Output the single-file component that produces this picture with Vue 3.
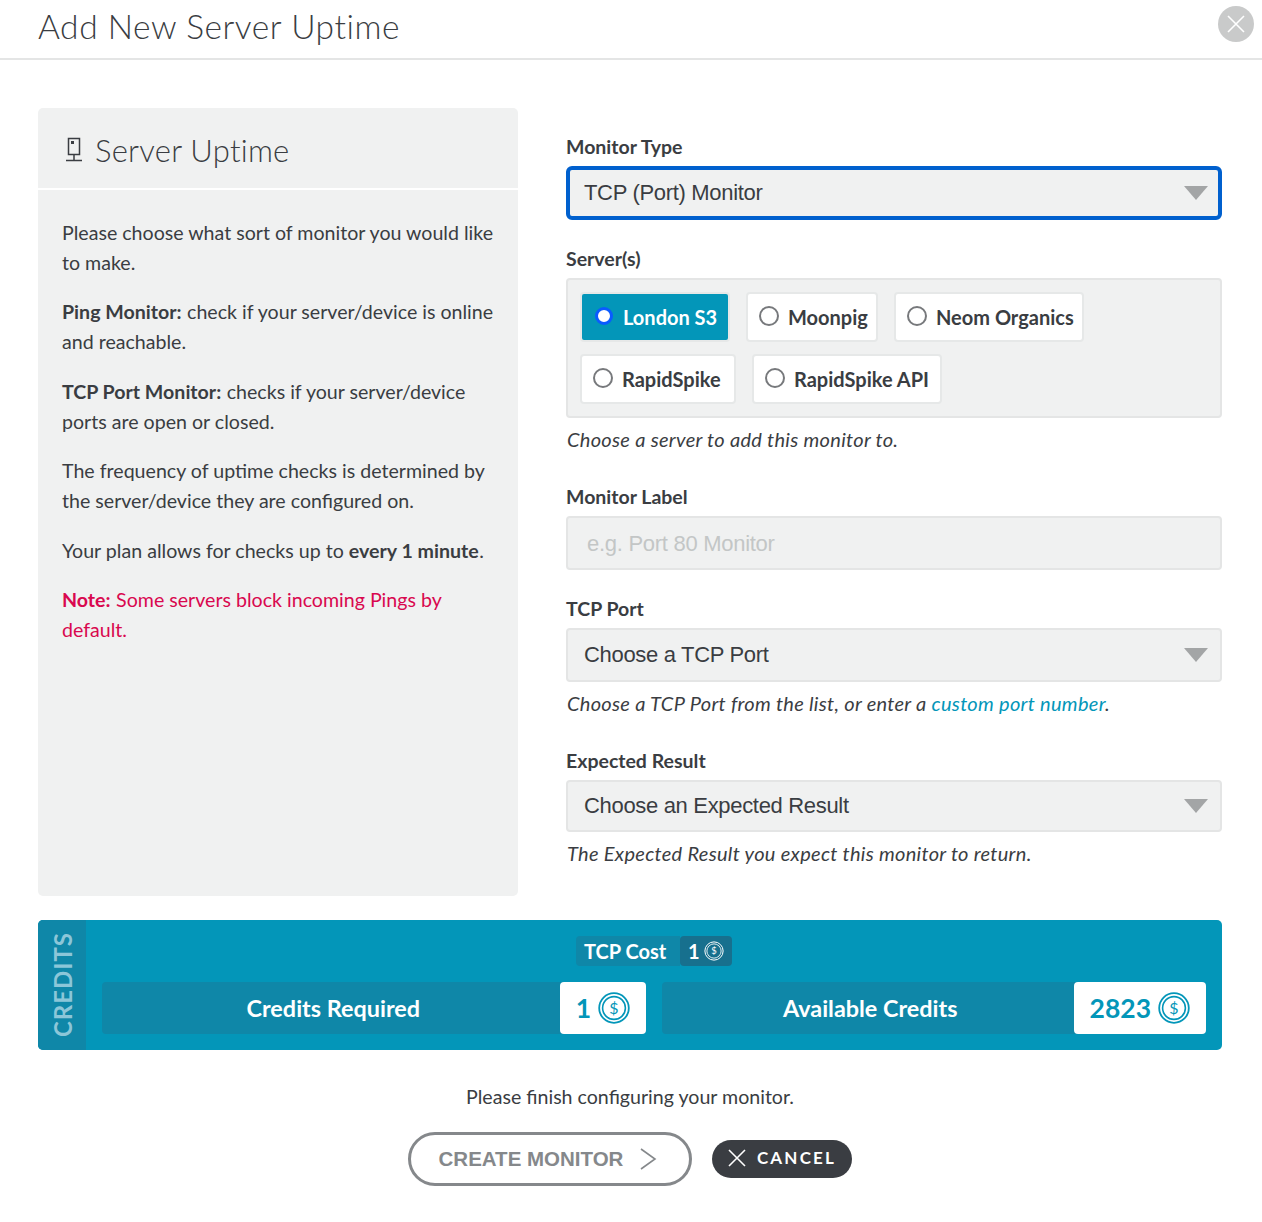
<template>
  <div class="modal">
    <!-- Header -->
    <div class="modal-header">
      <h1 class="modal-title">Add New Server Uptime</h1>
      <button class="btn-close" aria-label="Close">
        <svg width="20" height="20" viewBox="0 0 20 20"><path d="M2 2 18 18M18 2 2 18" stroke="#fff" stroke-width="1.6" fill="none" /></svg>
      </button>
    </div>

    <div class="modal-body">
      <!-- Info panel -->
      <div class="info-panel">
        <div class="info-head">
          <svg class="info-icon" width="20" height="28" viewBox="0 0 20 28">
            <path d="M4.5 2.5h11v16h-11zM10 18.5v6M2 24.5h16" stroke="#3a3d42" stroke-width="1.5" fill="none" />
            <rect x="7" y="5" width="3" height="3" fill="#3a3d42" />
          </svg>
          <span>Server Uptime</span>
        </div>
        <div class="info-text">
          <p>Please choose what sort of monitor you would like to make.</p>
          <p><b>Ping Monitor:</b> check if your server/device is online and reachable.</p>
          <p><b>TCP Port Monitor:</b> checks if your server/device ports are open or closed.</p>
          <p>The frequency of uptime checks is determined by the server/device they are configured on.</p>
          <p>Your plan allows for checks up to <b>every 1 minute</b>.</p>
          <p class="note"><b>Note:</b> Some servers block incoming Pings by default.</p>
        </div>
      </div>

      <!-- Form -->
      <div class="form">
        <div class="field">
          <label>Monitor Type</label>
          <div class="select focused"><span>TCP (Port) Monitor</span><i class="arrow"></i></div>
        </div>

        <div class="field servers-field">
          <label>Server(s)</label>
          <div class="servers">
            <div v-for="s in servers" :key="s.name" class="chip" :class="{ active: s.active }" :style="{ width: s.width + 'px' }">
              <i class="radio"></i>
              <span>{{ s.name }}</span>
            </div>
          </div>
          <div class="help">Choose a server to add this monitor to.</div>
        </div>

        <div class="field label-field">
          <label>Monitor Label</label>
          <input class="input" placeholder="e.g. Port 80 Monitor" />
        </div>

        <div class="field port-field">
          <label>TCP Port</label>
          <div class="select"><span>Choose a TCP Port</span><i class="arrow"></i></div>
          <div class="help">Choose a TCP Port from the list, or enter a <a>custom port number</a>.</div>
        </div>

        <div class="field result-field">
          <label>Expected Result</label>
          <div class="select short"><span>Choose an Expected Result</span><i class="arrow"></i></div>
          <div class="help">The Expected Result you expect this monitor to return.</div>
        </div>
      </div>
    </div>

    <!-- Credits -->
    <div class="credits">
      <div class="credits-side"><span>CREDITS</span></div>
      <div class="credits-main">
        <div class="cost">
          <span class="cost-label">TCP Cost</span>
          <span class="cost-value">1
            <svg width="20" height="20" viewBox="0 0 32 32" class="coin">
              <circle cx="16" cy="16" r="14.6" fill="none" stroke="#fff" stroke-width="1.6" />
              <circle cx="16" cy="16" r="11.4" fill="none" stroke="#fff" stroke-width="1.4" />
              <text x="16" y="21.5" text-anchor="middle" font-size="15" font-weight="400" fill="#fff">$</text>
            </svg>
          </span>
        </div>
        <div class="credit-rows">
          <div class="credit-row">
            <div class="credit-name">Credits Required</div>
            <div class="credit-val">1
              <svg width="32" height="32" viewBox="0 0 32 32" class="coin">
                <circle cx="16" cy="16" r="14.8" fill="none" stroke="#0396b9" stroke-width="1.8" />
                <circle cx="16" cy="16" r="11.4" fill="none" stroke="#0396b9" stroke-width="1.6" />
                <text x="16" y="22" text-anchor="middle" font-size="16" font-weight="400" fill="#0396b9">$</text>
              </svg>
            </div>
          </div>
          <div class="credit-row">
            <div class="credit-name">Available Credits</div>
            <div class="credit-val">2823
              <svg width="32" height="32" viewBox="0 0 32 32" class="coin">
                <circle cx="16" cy="16" r="14.8" fill="none" stroke="#0396b9" stroke-width="1.8" />
                <circle cx="16" cy="16" r="11.4" fill="none" stroke="#0396b9" stroke-width="1.6" />
                <text x="16" y="22" text-anchor="middle" font-size="16" font-weight="400" fill="#0396b9">$</text>
              </svg>
            </div>
          </div>
        </div>
      </div>
    </div>

    <!-- Footer -->
    <div class="footer">
      <div class="footer-text">Please finish configuring your monitor.</div>
      <div class="footer-actions">
        <button class="btn-create">
          CREATE MONITOR
          <svg width="18" height="22" viewBox="0 0 18 22"><path d="M2 1 16 11 2 21" stroke="#85888b" stroke-width="1.6" fill="none" /></svg>
        </button>
        <button class="btn-cancel">
          <svg width="18" height="18" viewBox="0 0 18 18"><path d="M1 1 17 17M17 1 1 17" stroke="#fff" stroke-width="1.6" fill="none" /></svg>
          CANCEL
        </button>
      </div>
    </div>
  </div>
</template>

<script setup>
const servers = [
  { name: 'London S3', active: true, width: 150 },
  { name: 'Moonpig', width: 132 },
  { name: 'Neom Organics', width: 190 },
  { name: 'RapidSpike', width: 156 },
  { name: 'RapidSpike API', width: 190 }
]
</script>

<style scoped>
.modal,
.modal * {
  box-sizing: border-box;
}

.modal {
  width: 1262px;
  height: 1222px;
  background: #fff;
  color: #3a3d42;
  font-family: Lato, "Noto Sans", sans-serif;
  overflow: hidden;
}

.modal-header {
  height: 60px;
  border-bottom: 2px solid #e4e5e5;
  padding: 0 8px 0 38px;
  display: flex;
  justify-content: space-between;
  align-items: center;
}

.modal-title {
  margin: 0 0 6px;
  font-size: 33.5px;
  font-weight: 300;
  letter-spacing: 0.55px;
  color: #3a3d42;
}

.btn-close {
  width: 36px;
  height: 36px;
  border: 0;
  padding: 0;
  border-radius: 50%;
  background: #c9caca;
  display: flex;
  align-items: center;
  justify-content: center;
  margin-bottom: 10px;
}

.modal-body {
  display: flex;
  gap: 48px;
  padding: 48px 40px 0 38px;
}

.info-panel {
  width: 480px;
  height: 788px;
  flex: none;
  background: #f0f1f1;
  border-radius: 5px;
}

.info-head {
  height: 82px;
  border-bottom: 2px solid #fff;
  padding: 4px 24px 0 26px;
  display: flex;
  align-items: center;
  gap: 11px;
  font-size: 31px;
  font-weight: 300;
  letter-spacing: 0.25px;
}

.info-icon {
  margin-top: 0;
}

.info-text {
  padding: 28px 24px;
  font-size: 19.6px;
  line-height: 30px;
}

.info-text p {
  margin: 0 0 19.4px;
}

.info-text b {
  margin-right: 0.5px;
}

.note {
  color: #d9084f;
}

.form {
  flex: 1;
  padding-top: 26px;
}

.field label {
  display: block;
  font-size: 19.5px;
  font-weight: 700;
  line-height: 26px;
  margin-bottom: 6px;
}

.select {
  height: 54px;
  background: #f0f1f1;
  border: 2px solid #e4e5e5;
  border-radius: 4px;
  padding: 0 16px;
  display: flex;
  align-items: center;
  justify-content: space-between;
  font-family: "Liberation Sans", Arial, sans-serif;
  font-size: 22px;
  letter-spacing: -0.32px;
  color: #3a3d42;
}

.select.short {
  height: 52px;
}

.select.focused {
  border: 4px solid #0060ce;
  border-radius: 6px;
  padding: 0 14px;
}

.arrow {
  width: 0;
  height: 0;
  margin-right: -4px;
  border-left: 12.5px solid transparent;
  border-right: 12.5px solid transparent;
  border-top: 14px solid #a3a5a6;
}

.servers-field {
  margin-top: 26px;
}

.servers {
  background: #f0f1f1;
  border: 2px solid #e4e5e5;
  border-radius: 4px;
  padding: 12px;
  height: 140px;
  display: flex;
  flex-wrap: wrap;
  gap: 12px 16px;
  align-content: flex-start;
}

.chip {
  height: 50px;
  background: #fff;
  border: 2px solid #e6e8e8;
  border-radius: 4px;
  padding: 0 11px;
  display: flex;
  align-items: center;
  gap: 9px;
  font-size: 20px;
  font-weight: 700;
  white-space: nowrap;
}

.chip.active {
  background: #0396b9;
  color: #fff;
}

.radio {
  width: 20px;
  height: 20px;
  border: 2px solid #77797c;
  border-radius: 50%;
  background: #fff;
  flex: none;
  margin-top: -2px;
}

.chip.active .radio {
  width: 18px;
  height: 18px;
  border: 3px solid #0a5bff;
  margin-right: 1px;
  margin-left: 2px;
}

.help {
  margin-top: 9px;
  font-size: 20px;
  font-style: italic;
  line-height: 24px;
  letter-spacing: 0.3px;
  padding-left: 1px;
}

.help a {
  color: #0396b9;
}

.label-field {
  margin-top: 33px;
}

.input {
  display: block;
  width: 100%;
  height: 54px;
  background: #f0f1f1;
  border: 2px solid #e4e5e5;
  border-radius: 4px;
  padding: 2px 19px 0;
  font-family: "Liberation Sans", Arial, sans-serif;
  font-size: 22px;
  letter-spacing: -0.28px;
}

.input::placeholder {
  color: #c3c6c6;
  opacity: 1;
}

.port-field {
  margin-top: 26px;
}

.result-field {
  margin-top: 33px;
}

.credits {
  margin: 24px 40px 0 38px;
  height: 130px;
  background: #0396b9;
  border-radius: 5px;
  display: flex;
  overflow: hidden;
}

.credits-side {
  width: 48px;
  flex: none;
  background: #0f87a8;
  display: flex;
  align-items: center;
  justify-content: center;
}

.credits-side span {
  writing-mode: vertical-rl;
  transform: rotate(180deg);
  font-size: 24px;
  font-weight: 700;
  letter-spacing: 1px;
  color: #8cc6d8;
}

.credits-main {
  flex: 1;
  padding: 16px;
}

.cost {
  display: flex;
  justify-content: center;
  height: 30px;
  color: #fff;
  font-size: 20px;
  font-weight: 700;
}

.cost-label {
  background: #0f87a8;
  padding: 0 8px;
  display: flex;
  align-items: center;
  width: 104px;
  border-radius: 4px 0 0 4px;
}

.cost-value {
  background: #17708e;
  padding: 0 8px;
  width: 52px;
  border-radius: 4px;
  display: flex;
  align-items: center;
  gap: 4px;
}

.credit-rows {
  display: flex;
  gap: 16px;
  margin-top: 16px;
}

.credit-row {
  width: 544px;
  height: 52px;
  display: flex;
  background: #0f87a8;
  border-radius: 4px;
  color: #fff;
  font-size: 23.4px;
  font-weight: 700;
}

.credit-name {
  flex: 1;
  display: flex;
  align-items: center;
  justify-content: center;
  padding-left: 5px;
}

.credit-val {
  background: #fff;
  color: #0396b9;
  border-radius: 4px;
  padding: 0 16px;
  display: flex;
  align-items: center;
  gap: 7px;
  font-size: 26.5px;
}

.footer {
  margin-top: 34px;
  text-align: center;
  padding-right: 2px;
}

.footer-text {
  font-size: 19.6px;
  line-height: 26px;
}

.footer-actions {
  margin-top: 22px;
  display: flex;
  justify-content: center;
  align-items: center;
  gap: 20px;
}

.btn-create {
  width: 284px;
  height: 54px;
  background: #fff;
  border: 3px solid #85888b;
  border-radius: 27px;
  display: flex;
  align-items: center;
  justify-content: center;
  gap: 16px;
  padding: 0 4px 0 0;
  color: #85888b;
  font-family: "Liberation Sans", Arial, sans-serif;
  font-size: 20.5px;
  font-weight: 700;
}

.btn-cancel {
  width: 140px;
  height: 38px;
  background: #3a3d42;
  border: 0;
  border-radius: 19px;
  display: flex;
  align-items: center;
  justify-content: center;
  gap: 11px;
  padding: 0 0 3px;
  color: #fff;
  font-family: Lato, sans-serif;
  font-size: 17px;
  font-weight: 700;
  letter-spacing: 2.2px;
}
</style>
